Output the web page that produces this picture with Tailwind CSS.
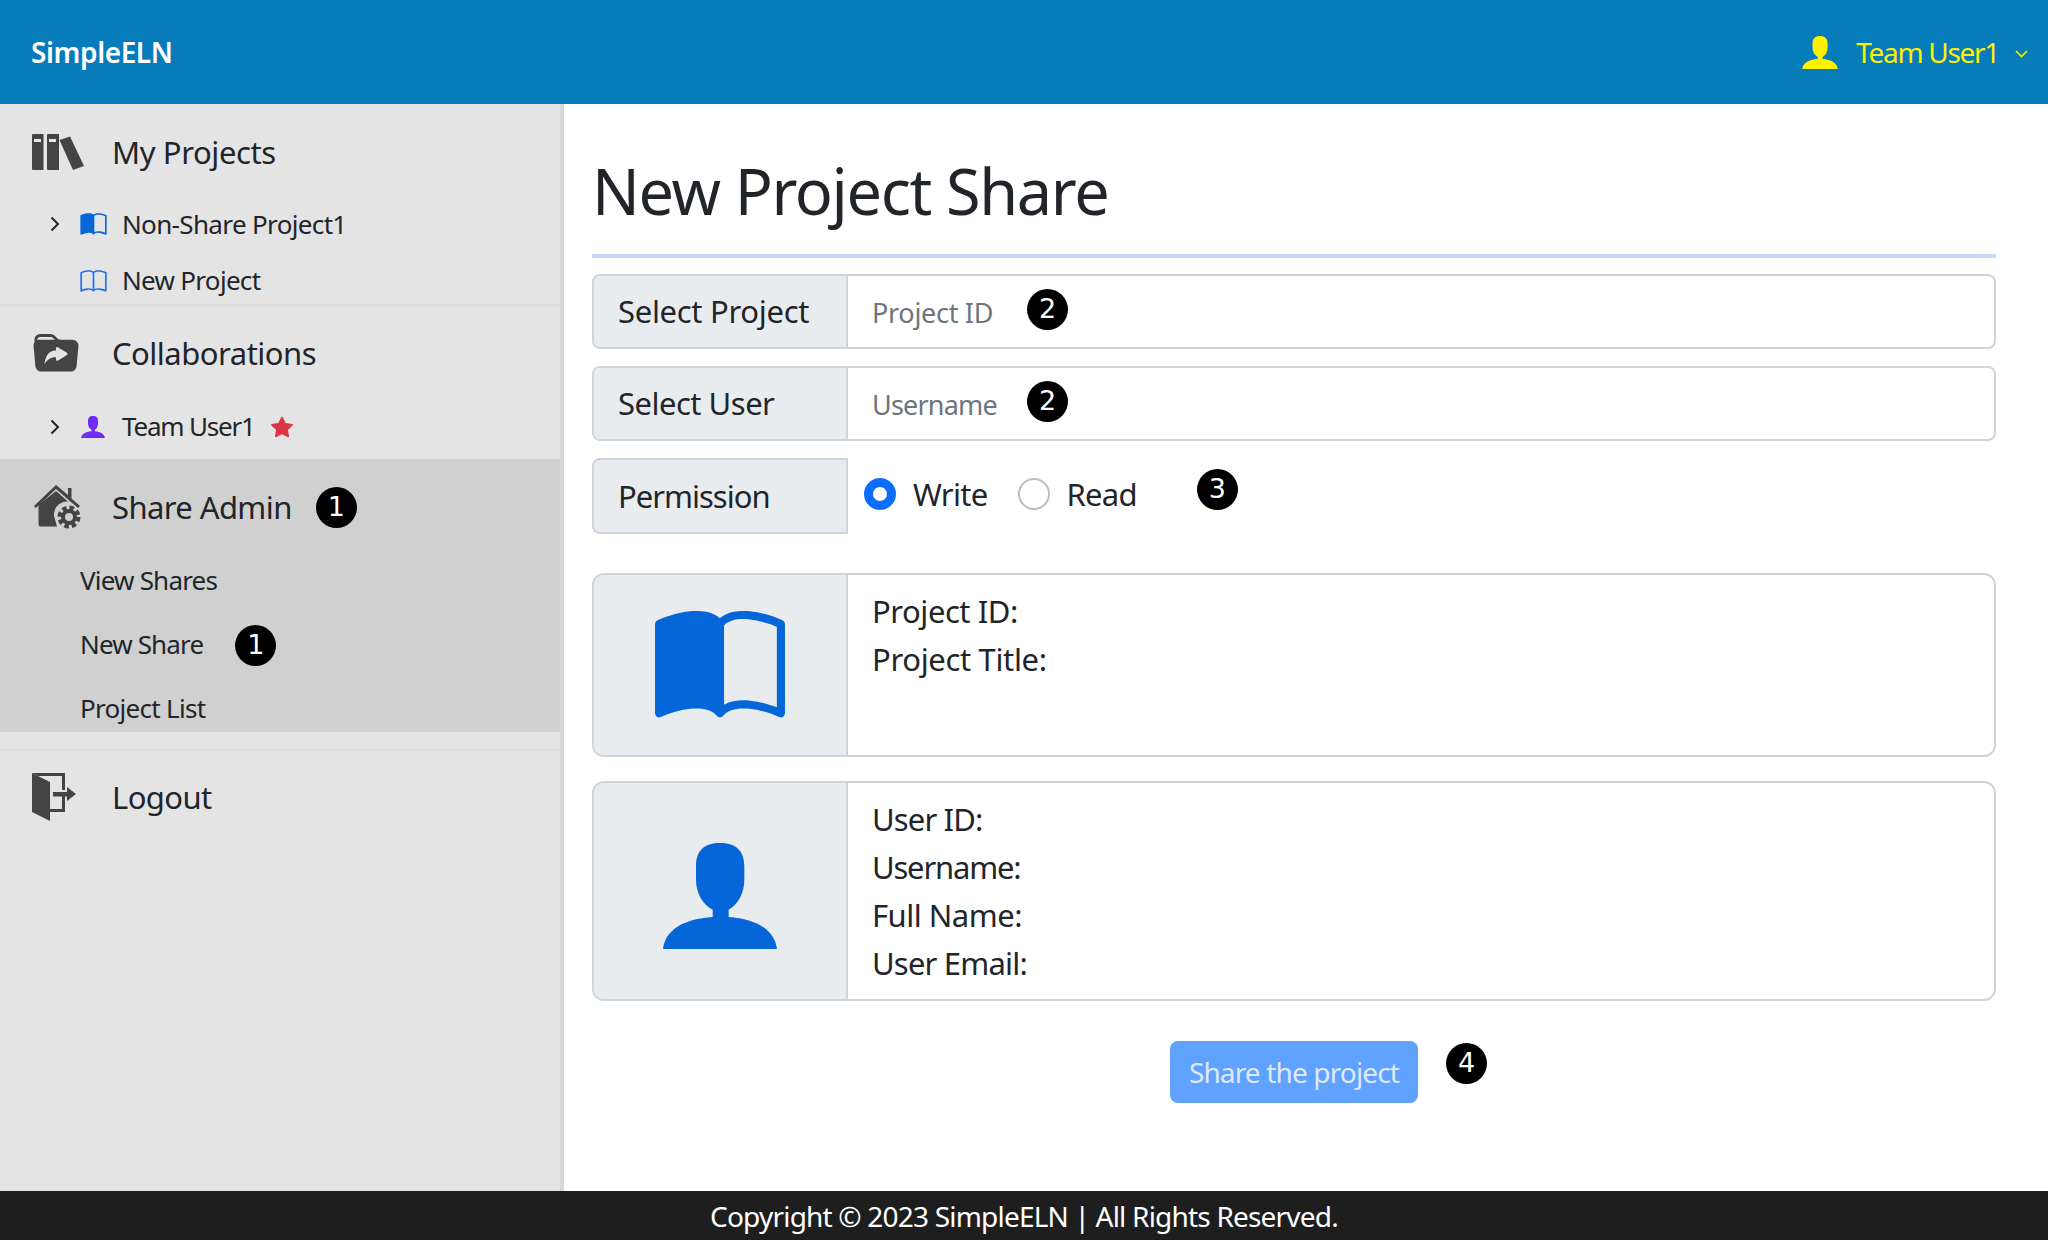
<!DOCTYPE html>
<html lang="en">
<head>
<meta charset="utf-8">
<title>SimpleELN</title>
<script src="https://cdn.jsdelivr.net/npm/@tailwindcss/browser@4"></script>
</head>
<body class="font-['Noto_Sans',sans-serif] text-[#212529]">
<div class="flex flex-col h-[1240px] w-[2048px] overflow-hidden">
  <header class="h-[104px] shrink-0 bg-[#067cba] flex items-center justify-between pl-[31px] pr-[20px]">
    <div class="text-white font-semibold text-[28px] tracking-[-0.4px]">SimpleELN</div>
    <div class="flex items-center text-[#fff000]">
      <svg class="w-[36px] h-[33px] mr-[18px]" viewBox="0 0 342 318" fill="currentColor"><path d="M171 0C215 0 244 20 244 70V110C244 150 225 185 197 200V222C280 228 335 260 342 318H0C7 260 62 228 149 222V200C119 185 99 150 99 110V70C99 20 127 0 171 0Z"/></svg>
      <span class="text-[28px] tracking-[-1.3px]">Team User1</span>
      <svg class="w-[13px] h-[8px] ml-[16px] mt-[3px]" viewBox="0 0 13 8" fill="none" stroke="currentColor" stroke-width="1.6"><path d="M1 1l5.500 5.500L12 1"/></svg>
    </div>
  </header>
  <div class="flex-1 flex min-h-0">
    <aside class="w-[564px] shrink-0 bg-[#e4e4e4] border-r-[4px] border-[#d8d8d8] text-[#212529]">
      <section class="h-[202px] border-b-2 border-[#dedede]">
        <div class="h-[98px] flex items-center pl-[32px] pb-[2px]">
          <svg class="w-[52px] h-[36px]" viewBox="32 133 52 36" fill="#444"><path fill-rule="evenodd" d="M33 133H43.500V169H33A1 1 0 0 1 32 168V134A1 1 0 0 1 33 133ZM34 138V141H41V138ZM48 133H59V169H48A1 1 0 0 1 47 168V134A1 1 0 0 1 48 133ZM49 138V141H56V138Z"/><path d="M59.500 139L70 135.500L84 165L73 169Z"/></svg>
          <span class="ml-[28px] text-[31px] tracking-[-0.4px]">My Projects</span>
        </div>
        <div class="h-[44px] flex items-center pl-[50px]">
          <svg class="w-[10px] h-[16px]" viewBox="0 0 10 16" fill="none" stroke="#212529" stroke-width="2"><path d="M1.500 1.500L8 8l-6.500 6.500"/></svg>
          <svg class="w-[27px] h-[22px] ml-[20px]" viewBox="0 0.800 16 13.400" fill="#0566d9"><path d="M8.500 2.687c.654-.689 1.782-.886 3.112-.752 1.234.124 2.503.523 3.388.893v9.923c-.918-.35-2.107-.692-3.287-.81-1.094-.111-2.278-.039-3.213.492V2.687zM8 1.783C7.015.936 5.587.81 4.287.94c-1.514.153-3.042.672-3.994 1.105A.5.5 0 0 0 0 2.500v11a.5.5 0 0 0 .707.455c.882-.4 2.303-.881 3.680-1.020 1.409-.142 2.590.087 3.223.877a.5.5 0 0 0 .78 0c.633-.79 1.814-1.019 3.222-.877 1.378.139 2.800.62 3.681 1.020A.5.5 0 0 0 16 13.500v-11a.5.5 0 0 0-.293-.455c-.952-.433-2.480-.952-3.994-1.105C10.413.809 8.985.936 8 1.783z"/></svg>
          <span class="ml-[15px] text-[26px] tracking-[-0.65px]">Non-Share Project1</span>
        </div>
        <div class="h-[44px] mt-[13px] flex items-center pl-[80px]">
          <svg class="w-[27px] h-[22px]" viewBox="0 0.800 16 13.400" fill="#1a73f0"><path d="M1 2.828c.885-.37 2.154-.769 3.388-.893 1.330-.134 2.458.063 3.112.752v9.746c-.935-.53-2.120-.603-3.213-.493-1.180.12-2.370.461-3.287.811V2.828zm7.500-.141c.654-.689 1.782-.886 3.112-.752 1.234.124 2.503.523 3.388.893v9.923c-.918-.35-2.107-.692-3.287-.81-1.094-.111-2.278-.039-3.213.492V2.687zM8 1.783C7.015.936 5.587.81 4.287.94c-1.514.153-3.042.672-3.994 1.105A.5.5 0 0 0 0 2.500v11a.5.5 0 0 0 .707.455c.882-.4 2.303-.881 3.680-1.020 1.409-.142 2.590.087 3.223.877a.5.5 0 0 0 .78 0c.633-.79 1.814-1.019 3.222-.877 1.378.139 2.800.62 3.681 1.020A.5.5 0 0 0 16 13.500v-11a.5.5 0 0 0-.293-.455c-.952-.433-2.480-.952-3.994-1.105C10.413.809 8.985.936 8 1.783z"/></svg>
          <span class="ml-[15px] mb-[2px] text-[26px] tracking-[-0.7px]">New Project</span>
        </div>
      </section>
      <section class="h-[153px]">
        <div class="h-[96px] flex items-center pl-[33px] pb-[1px]">
          <svg class="w-[46px] h-[39px]" viewBox="0 1 16 13.500" fill="#444"><path d="M13.810 3H9.828a2 2 0 0 1-1.414-.586l-.828-.828A2 2 0 0 0 6.172 1H2.500a2 2 0 0 0-2 2l.04.87a1.990 1.990 0 0 0-.342 1.311l.637 7A2 2 0 0 0 2.826 14h10.348a2 2 0 0 0 1.991-1.819l.637-7A2 2 0 0 0 13.810 3zM2.190 3c-.24 0-.47.042-.683.12L1.500 2.980a1 1 0 0 1 1-.98h3.672a1 1 0 0 1 .707.293L7.586 3H2.190zm9.608 5.271-3.182 1.970c-.27.166-.616-.036-.616-.372V9.100s-2.571-.3-4 2.400c.571-4.800 3.143-4.800 4-4.800v-.769c0-.336.346-.538.616-.371l3.182 1.969c.27.166.27.576 0 .742z"/></svg>
          <span class="ml-[33px] text-[31px] tracking-[-0.5px]">Collaborations</span>
        </div>
        <div class="h-[50px] flex items-center pl-[50px]">
          <svg class="w-[10px] h-[16px]" viewBox="0 0 10 16" fill="none" stroke="#212529" stroke-width="2"><path d="M1.500 1.500L8 8l-6.500 6.500"/></svg>
          <svg class="w-[24px] h-[22px] ml-[21px]" viewBox="0 0 342 318" fill="#6f2cf5"><path d="M171 0C215 0 244 20 244 70V110C244 150 225 185 197 200V222C280 228 335 260 342 318H0C7 260 62 228 149 222V200C119 185 99 150 99 110V70C99 20 127 0 171 0Z"/></svg>
          <span class="ml-[17px] mb-[2px] text-[26px] tracking-[-1.2px]">Team User1</span>
          <svg class="w-[22px] h-[22px] ml-[16px]" viewBox="0 0 16 16" fill="#dc3545"><path d="M3.612 15.443c-.386.198-.824-.149-.746-.592l.83-4.730L.173 6.765c-.329-.314-.158-.888.283-.95l4.898-.696L7.538.792c.197-.39.73-.39.927 0l2.184 4.327 4.898.696c.441.062.612.636.282.95l-3.522 3.356.83 4.730c.078.443-.36.79-.746.592L8 13.187l-4.389 2.256z"/></svg>
        </div>
      </section>
      <section class="h-[273px] bg-[#d0d0d0]">
        <div class="h-[98px] flex items-center pl-[33px] pb-[2px]">
          <svg class="w-[48px] h-[45px]" viewBox="33 490 48 45" fill="#444"><path d="M56 490L68 500V493H71.500V503.500L80 511L78 513L56 494L36 513L34 511Z"/><path d="M38.500 510L56 496L68 506.500A13 13 0 0 0 55 524.500L57 531.500H41A2.500 2.500 0 0 1 38.500 529Z"/><circle cx="69" cy="522" r="6.500" fill="none" stroke="#d0d0d0" stroke-width="12"/><circle cx="69" cy="522" r="6" fill="none" stroke="#444" stroke-width="4"/><circle cx="69" cy="522" r="9.500" fill="none" stroke="#444" stroke-width="4" stroke-dasharray="4.500 3"/></svg>
          <span class="ml-[31px] text-[31px] tracking-[-0.6px]">Share Admin</span>
          <span class="ml-[24px] w-[41px] h-[41px] rounded-full bg-black text-white font-['DejaVu_Sans',sans-serif] text-[27px] flex items-center justify-center">1</span>
        </div>
        <div class="h-[48px] flex items-center pl-[80px] pb-[2px] text-[26px] tracking-[-0.8px]">View Shares</div>
        <div class="h-[48px] mt-[16px] flex items-center pl-[80px] text-[26px] tracking-[-0.85px]"><span class="mb-[2px]">New Share</span><span class="ml-[32px] w-[41px] h-[41px] rounded-full bg-black text-white font-['DejaVu_Sans',sans-serif] text-[27px] tracking-normal flex items-center justify-center">1</span></div>
        <div class="h-[47px] mt-[16px] flex items-center pl-[80px] text-[26px] tracking-[-0.7px]">Project List</div>
      </section>
      <section class="mt-[17px] border-t-2 border-[#dedede]">
        <div class="h-[94px] flex items-center pl-[32px] pb-[2px]">
          <svg class="w-[44px] h-[48px]" viewBox="32 773 44 48" fill="#444"><path d="M32 773L50 782V821L32 812Z"/><path d="M32 773H65V790H62V776H38ZM50 809H62V796H65V812H50Z"/><path d="M53 792H67V787L76 794L67 801V796.500H53Z"/></svg>
          <span class="ml-[36px] text-[31px] tracking-[-0.6px]">Logout</span>
        </div>
      </section>
    </aside>
    <main class="flex-1 pl-[28px] pr-[52px]">
      <h1 class="h-[154px] flex items-center pt-[22px] text-[63px] tracking-[-1.35px] leading-none border-b-4 border-[#c0d9fb]">New Project Share</h1>
      <div class="mt-[16px] relative flex h-[75px] border-2 border-[#ced4da] rounded-lg overflow-hidden">
        <div class="w-[254px] shrink-0 bg-[#e9ecef] border-r-2 border-[#ced4da] flex items-center pl-[24px] text-[31px] tracking-[-0.3px]">Select Project</div>
        <input class="flex-1 pl-[24px] pt-[3px] text-[27px] tracking-[-0.3px] placeholder:text-[#6c757d] outline-none" placeholder="Project ID">
        <span class="absolute left-[433px] top-[13px] w-[41px] h-[41px] rounded-full bg-black text-white font-['DejaVu_Sans',sans-serif] text-[27px] flex items-center justify-center">2</span>
      </div>
      <div class="mt-[17px] relative flex h-[75px] border-2 border-[#ced4da] rounded-lg overflow-hidden">
        <div class="w-[254px] shrink-0 bg-[#e9ecef] border-r-2 border-[#ced4da] flex items-center pl-[24px] text-[31px] tracking-[-0.5px]">Select User</div>
        <input class="flex-1 pl-[24px] pt-[3px] text-[27px] tracking-[-0.8px] placeholder:text-[#6c757d] outline-none" placeholder="Username">
        <span class="absolute left-[433px] top-[13px] w-[41px] h-[41px] rounded-full bg-black text-white font-['DejaVu_Sans',sans-serif] text-[27px] flex items-center justify-center">2</span>
      </div>
      <div class="mt-[17px] flex items-center h-[76px]">
        <div class="w-[256px] h-full shrink-0 bg-[#e9ecef] border-2 border-[#ced4da] rounded-l-lg flex items-center pl-[24px] text-[31px] tracking-[-1px]">Permission</div>
        <div class="flex items-center -mt-[4px] pl-[16px] text-[31px] tracking-[-0.7px]">
          <span class="w-[32px] h-[32px] rounded-full border-[9px] border-[#0d6efd] bg-white"></span>
          <span class="ml-[17px]">Write</span>
          <span class="ml-[30px] w-[32px] h-[32px] rounded-full border-2 border-[#bdbdbd] bg-white"></span>
          <span class="ml-[17px]">Read</span>
          <span class="ml-[60px] -mt-[10px] w-[41px] h-[41px] rounded-full bg-black text-white font-['DejaVu_Sans',sans-serif] text-[27px] tracking-normal flex items-center justify-center">3</span>
        </div>
      </div>
      <div class="mt-[39px] flex h-[184px] border-2 border-[#ced4da] rounded-xl overflow-hidden">
        <div class="w-[254px] shrink-0 bg-[#e9ecef] border-r-2 border-[#ced4da] flex items-center justify-center">
          <svg class="w-[130px] h-[108px]" viewBox="0 0.900 16 13.300" fill="#0566d9"><path d="M8.500 2.687c.654-.689 1.782-.886 3.112-.752 1.234.124 2.503.523 3.388.893v9.923c-.918-.35-2.107-.692-3.287-.81-1.094-.111-2.278-.039-3.213.492V2.687zM8 1.783C7.015.936 5.587.81 4.287.94c-1.514.153-3.042.672-3.994 1.105A.5.5 0 0 0 0 2.500v11a.5.5 0 0 0 .707.455c.882-.4 2.303-.881 3.680-1.020 1.409-.142 2.590.087 3.223.877a.5.5 0 0 0 .78 0c.633-.79 1.814-1.019 3.222-.877 1.378.139 2.800.62 3.681 1.020A.5.5 0 0 0 16 13.500v-11a.5.5 0 0 0-.293-.455c-.952-.433-2.480-.952-3.994-1.105C10.413.809 8.985.936 8 1.783z"/></svg>
        </div>
        <div class="pl-[24px] pt-[12px] text-[31px] leading-[48px]">
          <p class="tracking-[-0.45px]">Project ID:</p>
          <p class="tracking-[-0.35px]">Project Title:</p>
        </div>
      </div>
      <div class="mt-[24px] flex h-[220px] border-2 border-[#ced4da] rounded-xl overflow-hidden">
        <div class="w-[254px] shrink-0 bg-[#e9ecef] border-r-2 border-[#ced4da] flex items-center justify-center">
          <svg class="w-[114px] h-[106px] mt-[10px]" viewBox="0 0 342 318" fill="#0566d9"><path d="M171 0C215 0 244 20 244 70V110C244 150 225 185 197 200V222C280 228 335 260 342 318H0C7 260 62 228 149 222V200C119 185 99 150 99 110V70C99 20 127 0 171 0Z"/></svg>
        </div>
        <div class="pl-[24px] pt-[12px] text-[31px] leading-[48px]">
          <p class="tracking-[-0.85px]">User ID:</p>
          <p class="tracking-[-1.2px]">Username:</p>
          <p class="tracking-[-0.5px]">Full Name:</p>
          <p class="tracking-[-0.8px]">User Email:</p>
        </div>
      </div>
      <div class="mt-[40px] relative flex justify-center">
        <button class="w-[248px] h-[62px] rounded-lg bg-[#5fa2ff] text-[#dfe8f5] text-[28px] tracking-[-0.85px]">Share the project</button>
        <span class="absolute left-[854px] top-[2px] w-[41px] h-[41px] rounded-full bg-black text-white font-['DejaVu_Sans',sans-serif] text-[27px] flex items-center justify-center">4</span>
      </div>
    </main>
  </div>
  <footer class="h-[49px] shrink-0 bg-[#1e1e1e] text-white flex items-center justify-center text-[28px] tracking-[-0.8px]">Copyright © 2023 SimpleELN | All Rights Reserved.</footer>
</div>
</body>
</html>
